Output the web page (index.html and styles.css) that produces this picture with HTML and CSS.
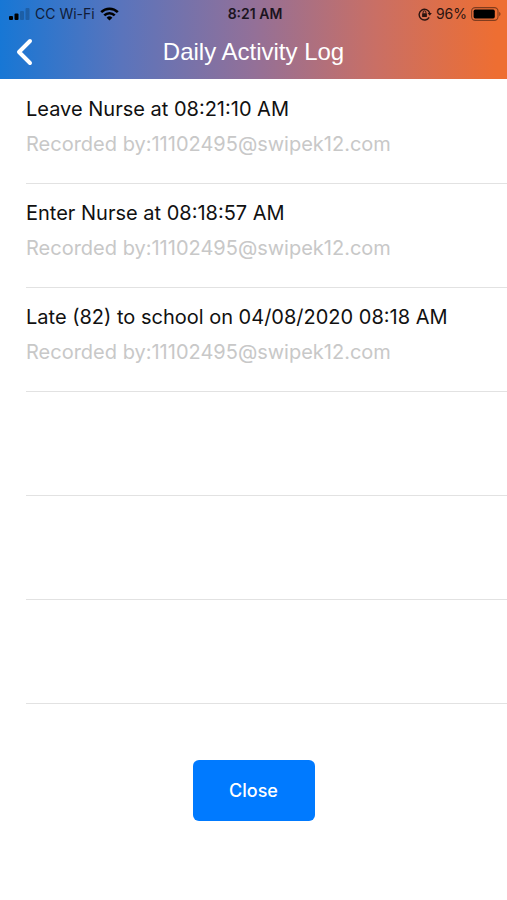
FILE: index.html
```html
<!DOCTYPE html>
<html lang="en">
<head>
<meta charset="utf-8">
<meta name="viewport" content="width=device-width, initial-scale=1">
<title>Daily Activity Log</title>
<link rel="stylesheet" href="styles.css">
</head>
<body>
<header class="header">
  <div class="status">
    <div class="status-side">
      <svg class="signal" width="21" height="12" viewBox="0 0 21 12" aria-hidden="true">
        <rect x="0" y="8" width="4" height="4" rx="1"/>
        <rect x="5.5" y="5.5" width="4" height="6.5" rx="1"/>
        <rect x="11" y="3" width="4" height="9" rx="1" opacity=".2"/>
        <rect x="16.5" y="0" width="4" height="12" rx="1" opacity=".2"/>
      </svg>
      <span>CC Wi-Fi</span>
      <svg width="19" height="14" viewBox="0 0 19 14" fill="none" stroke="#000" stroke-width="2.6" aria-hidden="true">
        <path d="M1.2 5.2a11.8 11.8 0 0 1 16.6 0"/>
        <path d="M4.3 8.4a7.4 7.4 0 0 1 10.4 0"/>
        <path d="M9.5 13.6 6.6 10.7a4.1 4.1 0 0 1 5.8 0z" fill="#000" stroke="none"/>
      </svg>
    </div>
    <time class="clock">8:21 AM</time>
    <div class="status-side status-end">
      <svg class="lock" width="14" height="14" viewBox="0 0 14 14" fill="none" stroke="#2b1410" stroke-width="1.4" aria-hidden="true">
        <path d="M11.2 10.4A5.4 5.4 0 1 1 11.7 6"/>
        <path d="M9.6 6h4.2l-2 2.8z" fill="#2b1410" stroke="none"/>
        <rect x="4.1" y="6.2" width="4.8" height="3.8" rx=".6" fill="#2b1410" stroke="none"/>
        <path d="M5.1 6.4V5.2a1.4 1.4 0 0 1 2.8 0v1.2" stroke-width="1"/>
      </svg>
      <span>96%</span>
      <svg class="battery" width="30" height="14" viewBox="0 0 30 14" aria-hidden="true">
        <rect x=".6" y=".6" width="26.4" height="12.8" rx="3.6" fill="none" stroke="#000" stroke-opacity=".45" stroke-width="1.1"/>
        <rect x="2.6" y="2.6" width="21.2" height="8.8" rx="1.6"/>
        <path d="M28.2 4.8c1.8.7 1.8 3.7 0 4.4z" opacity=".45"/>
      </svg>
    </div>
  </div>
  <nav class="bar">
    <button class="back" type="button" aria-label="Back">
      <svg width="18" height="28" viewBox="0 0 18 28" fill="none" stroke="#fff" stroke-width="4" stroke-linecap="round" stroke-linejoin="round" aria-hidden="true"><path d="M14 3 3 14l11 11"/></svg>
    </button>
    <h1 class="title">Daily Activity Log</h1>
  </nav>
</header>
<main>
  <ul class="log">
    <li class="row"><p class="event">Leave Nurse at 08:21:10 AM</p><p class="author">Recorded by:11102495@swipek12.com</p></li>
    <li class="row"><p class="event">Enter Nurse at 08:18:57 AM</p><p class="author">Recorded by:11102495@swipek12.com</p></li>
    <li class="row"><p class="event">Late (82) to school on 04/08/2020 08:18 AM</p><p class="author">Recorded by:11102495@swipek12.com</p></li>
    <li class="row"></li>
    <li class="row"></li>
    <li class="row"></li>
  </ul>
  <div class="actions"><button class="close" type="button">Close</button></div>
</main>
</body>
</html>
```
FILE: styles.css
```css
* { box-sizing: border-box; }
body {
  margin: 0;
  background: #fff;
  color: #111;
  font-family: Inter, "Liberation Sans", sans-serif;
}
h1, p, ul { margin: 0; padding: 0; }
button { border: 0; font: inherit; cursor: pointer; }
svg { display: block; flex: none; }

.header { background: linear-gradient(90deg, #1777d5 0%, #5a74bc 24%, #937098 50%, #c96f65 74%, #ee6e32 98%); }
.status {
  display: grid;
  grid-template-columns: 1fr auto 1fr;
  align-items: center;
  height: 27px;
  padding: 0 6px 0 9px;
  font-size: 14px;
  color: #1b1420;
}
.status-side { display: flex; align-items: center; gap: 5px; color: #101c38; }
.status-end { justify-content: flex-end; gap: 4px; color: #2b1410; }
.clock { font-weight: 600; }

.bar {
  display: grid;
  grid-template-columns: 48px 1fr 48px;
  align-items: center;
  height: 52px;
  padding-bottom: 2px;
}
.back { padding: 4px 14px 4px 16px; background: none; }
.title {
  color: #fff;
  font: 400 24px/32px "Liberation Sans", sans-serif;
  text-align: center;
}

.log { list-style: none; padding: 1px 0 0 26px; }
.row {
  min-height: 104px;
  padding-top: 12px;
  border-bottom: 1px solid #e2e2e2;
  font-size: 20px;
  line-height: 35px;
}
.author { color: #c8c8c8; }

.actions { display: flex; justify-content: center; padding: 56px 0; }
.close {
  min-width: 122px;
  height: 61px;
  border-radius: 6px;
  background: #007aff;
  color: #fff;
  font-size: 18px;
  font-weight: 500;
}
```
